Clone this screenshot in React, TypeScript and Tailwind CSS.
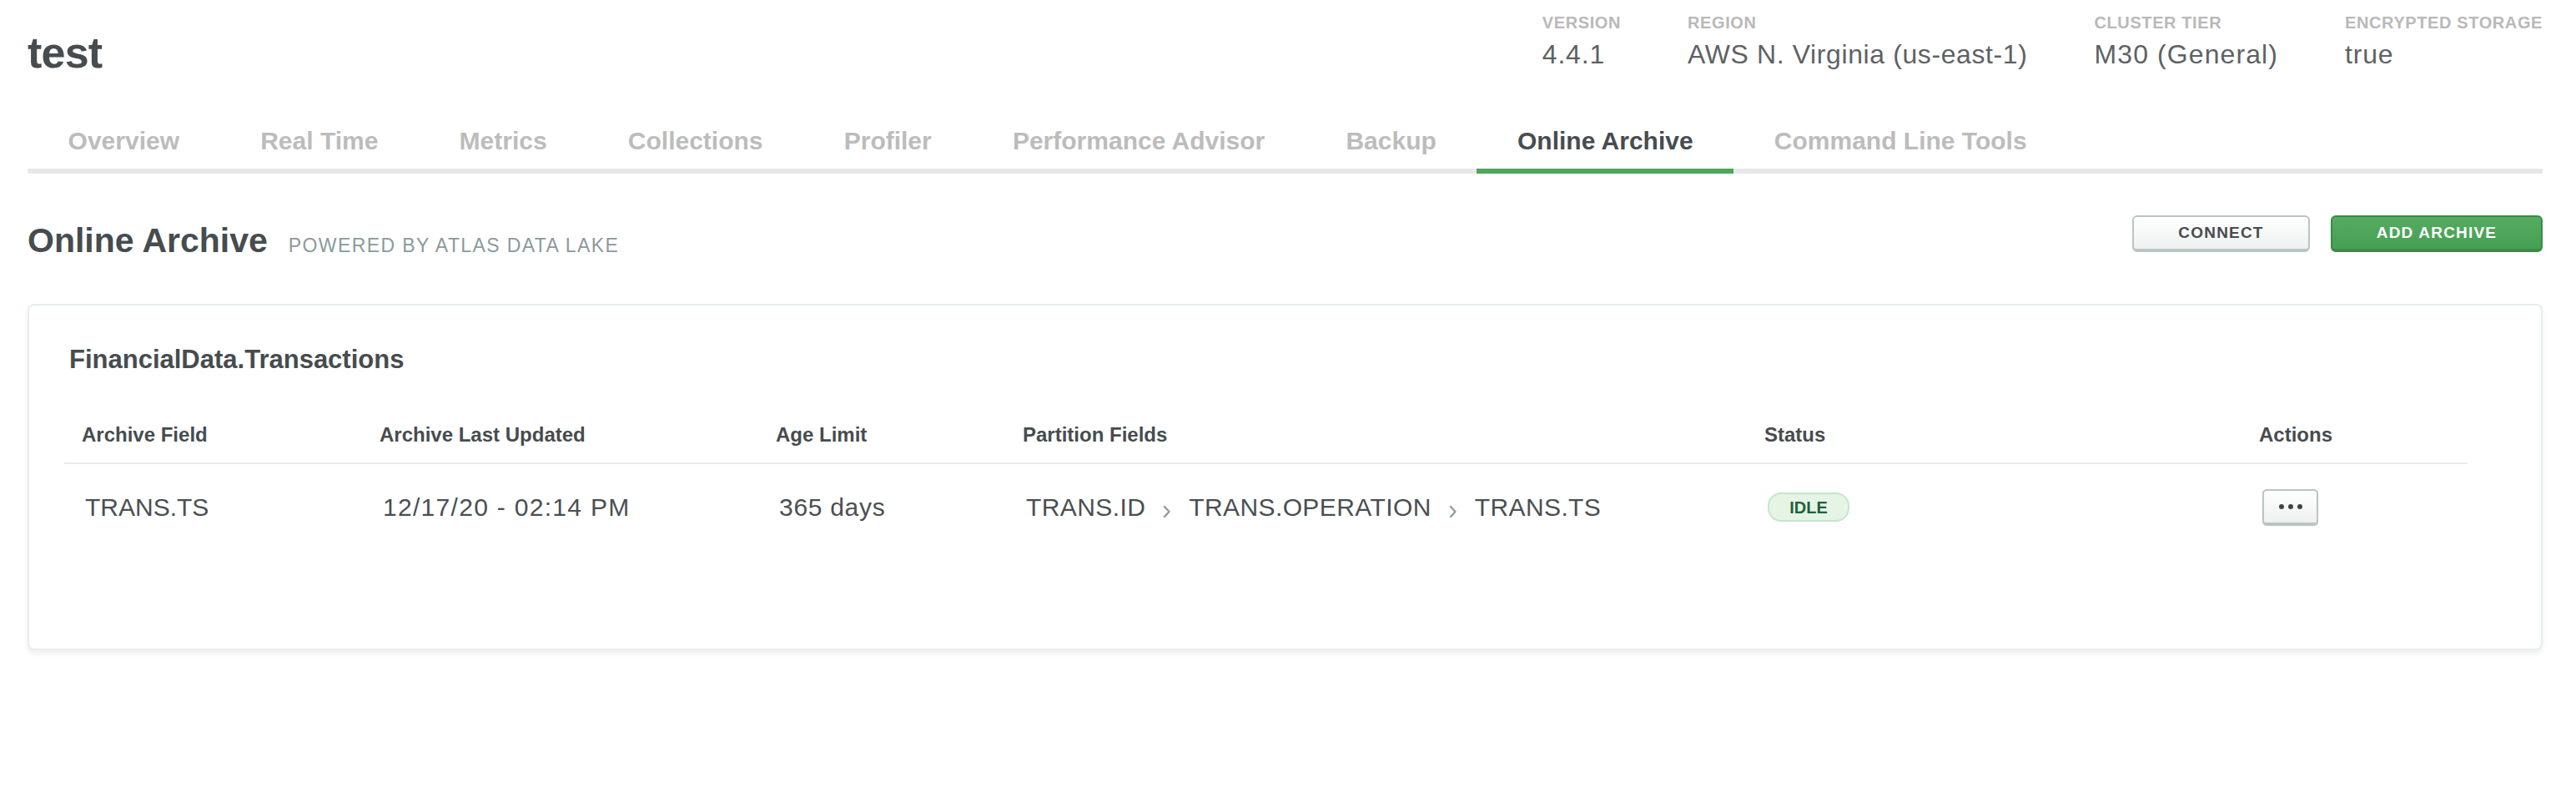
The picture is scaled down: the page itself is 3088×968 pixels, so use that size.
const tabs = [
  "Overview",
  "Real Time",
  "Metrics",
  "Collections",
  "Profiler",
  "Performance Advisor",
  "Backup",
  "Online Archive",
  "Command Line Tools",
];

const meta = [
  { label: "VERSION", value: "4.4.1", track: "tracking-[0.8px]" },
  { label: "REGION", value: "AWS N. Virginia (us-east-1)", track: "tracking-[0.6px]" },
  { label: "CLUSTER TIER", value: "M30 (General)", track: "tracking-[1.1px]" },
  { label: "ENCRYPTED STORAGE", value: "true", track: "tracking-[0.8px]" },
];

const columns = [
  "Archive Field",
  "Archive Last Updated",
  "Age Limit",
  "Partition Fields",
  "Status",
  "Actions",
];

const Chevron = () => (
  <svg
    width="12"
    height="22"
    viewBox="0 0 12 22"
    className="mx-[20px] mt-[10px] shrink-0"
    fill="none"
  >
    <path
      d="M3 5 L8.5 11 L3 17"
      stroke="#8f9e9d"
      strokeWidth="2.4"
      strokeLinecap="round"
      strokeLinejoin="round"
    />
  </svg>
);

export default function App() {
  const partitions = ["TRANS.ID", "TRANS.OPERATION", "TRANS.TS"];

  return (
    <div className="w-[3088px] min-h-[968px] bg-white pl-[33px] pr-[40px] font-['Liberation_Sans',Arial,sans-serif] text-[#464c4f]">
      {/* cluster header */}
      <div className="flex justify-between items-start">
        <h1 className="pt-[37px] text-[52px] leading-[52px] font-bold tracking-[-0.8px]">test</h1>
        <div className="flex gap-[80px] pt-[17px]">
          {meta.map((m) => (
            <div key={m.label} className="flex flex-col">
              <span className="text-[20px] leading-[20px] font-bold tracking-[0.6px] text-[#b9b9b9]">
                {m.label}
              </span>
              <span
                className={`mt-[13px] text-[32px] leading-[30px] text-[#5d6265] ${m.track}`}
              >
                {m.value}
              </span>
            </div>
          ))}
        </div>
      </div>

      {/* tabs */}
      <div className="mt-[65px] flex border-b-[6px] border-[#e7e9e8]">
        {tabs.map((t) =>
          t === "Online Archive" ? (
            <div
              key={t}
              className="-mb-[6px] border-b-[6px] border-[#4ea65b] px-[48.6px] pb-[18px] text-[30px] leading-[30px] font-bold text-[#464c4f]"
            >
              {t}
            </div>
          ) : (
            <div
              key={t}
              className="px-[48.6px] pb-[18px] text-[30px] leading-[30px] font-bold text-[#bcbcbc]"
            >
              {t}
            </div>
          )
        )}
      </div>

      {/* section header */}
      <div className="mt-[50px] flex justify-between items-start">
        <div className="mt-[10px] flex items-baseline">
          <h2 className="text-[41px] leading-[40px] font-bold">Online Archive</h2>
          <span className="ml-[25px] text-[23px] tracking-[1.4px] text-[#8a9a9c]">
            POWERED BY ATLAS DATA LAKE
          </span>
        </div>
        <div className="flex gap-[25px]">
          <button
            type="button"
            className="h-[44px] w-[213px] rounded-[6px] border-2 border-b-[4px] border-[#b9c5c3] bg-gradient-to-b from-white to-[#eef1f1] text-[19px] font-bold tracking-[1.2px] text-[#464c4f]"
          >
            CONNECT
          </button>
          <button
            type="button"
            className="h-[44px] w-[254px] rounded-[6px] border-2 border-b-[4px] border-[#3b8a47] bg-gradient-to-b from-[#55ab61] to-[#45a051] text-[19px] font-bold tracking-[1.2px] text-white"
          >
            ADD ARCHIVE
          </button>
        </div>
      </div>

      {/* archive card */}
      <div className="mt-[52px] h-[415px] rounded-[8px] border-2 border-[#e7edec] bg-white pl-[42px] pt-[49px] shadow-[0_4px_6px_rgba(0,0,0,0.07)]">
        <h3 className="pl-[6px] text-[31px] leading-[31px] font-bold text-[#464c4f]">
          FinancialData.Transactions
        </h3>

        <div className="mt-[63px] w-[2881px]">
          <div className="grid grid-cols-[357px_475px_296px_889px_593px_271px] border-b-2 border-[#e8ebeb]">
            {columns.map((c) => (
              <div
                key={c}
                className="pl-[21px] pb-[21px] text-[24px] leading-[24px] font-bold text-[#464c4f]"
              >
                {c}
              </div>
            ))}
          </div>

          <div className="grid h-[104px] grid-cols-[357px_475px_296px_889px_593px_271px] items-center text-[30px] leading-[30px] text-[#4a4f52]">
            <div className="pl-[25px]">TRANS.TS</div>
            <div className="pl-[25px] tracking-[1.3px]">12/17/20 - 02:14 PM</div>
            <div className="pl-[25px] tracking-[0.7px]">365 days</div>
            <div className="flex items-center pl-[25px] tracking-[0.4px]">
              {partitions.map((p, i) => (
                <div key={p} className="flex items-center">
                  {i > 0 && <Chevron />}
                  <span>{p}</span>
                </div>
              ))}
            </div>
            <div className="pl-[25px]">
              <span className="inline-flex h-[35px] w-[98px] items-center justify-center rounded-[16px] border-2 border-[#c4e6cb] bg-[#e6f4e6] text-[20px] font-bold text-[#21603a]">
                IDLE
              </span>
            </div>
            <div className="pl-[25px]">
              <button
                type="button"
                className="flex h-[44px] w-[67px] items-center justify-center gap-[5px] rounded-[5px] border-2 border-b-[4px] border-[#b9c5c3] bg-gradient-to-b from-white to-[#eef1f1]"
              >
                <span className="h-[6px] w-[6px] rounded-full bg-[#3d4548]" />
                <span className="h-[6px] w-[6px] rounded-full bg-[#3d4548]" />
                <span className="h-[6px] w-[6px] rounded-full bg-[#3d4548]" />
              </button>
            </div>
          </div>
        </div>
      </div>
    </div>
  );
}
